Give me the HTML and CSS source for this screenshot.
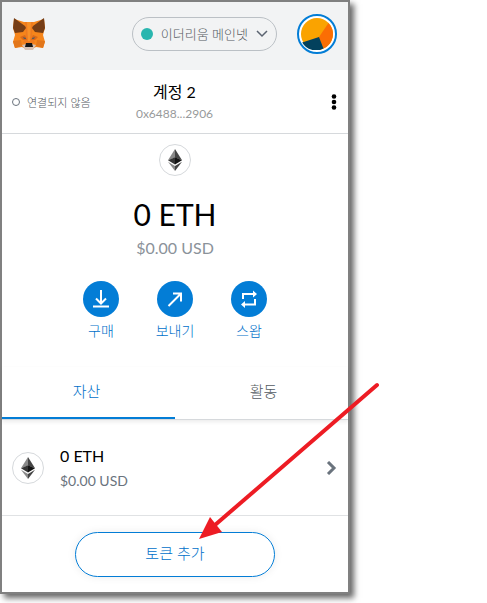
FILE: index.html
```html
<!DOCTYPE html>
<html lang="ko">
<head>
    <meta charset="UTF-8">
    <meta name="viewport" content="width=device-width, initial-scale=1.0">
    <title>MetaMask</title>
    <link rel="stylesheet" href="styles.css">
</head>
<body>
    <!-- eth logo, used twice -->
    <svg class="symbols" aria-hidden="true">
        <symbol id="eth" viewBox="0 0 14 22">
            <path fill="#8a8a8a" d="M7 0L0 11.2 7 8.4z"/>
            <path fill="#454545" d="M7 0v8.4l7 2.8z"/>
            <path fill="#343434" d="M7 8.2L0 11.2 7 15.4z"/>
            <path fill="#141414" d="M7 8.2l7 3L7 15.4z"/>
            <path fill="#8a8a8a" d="M0 12.8L7 22v-5z"/>
            <path fill="#454545" d="M14 12.8L7 22v-5z"/>
        </symbol>
    </svg>

    <main class="wallet">
        <header class="app-header">
            <svg class="fox" viewBox="0 0 34 32" role="img" aria-label="MetaMask">
                <path fill="#f6851b" d="M2 1l10 3h10l10-3 1 9-2 7 2 7-2 6-7-1-4 2h-6l-4-2-7 1-2-6 2-7-2-7z"/>
                <path fill="#e2761b" d="M1 23l8-1 1 6-7 2zM33 23l-8-1-1 6 7 2z"/>
                <path fill="#ee7b20" d="M13 4h8l-1 12 3 9h-12l3-9z"/>
                <path fill="#f89028" d="M15 4h4l-1 19h-2z"/>
                <path fill="#763d16" d="M2 0l11 8 1 2-3 4-8 1-2-5zM32 0L21 8l-1 2 3 4 8 1 2-5z"/>
                <path fill="#d9691a" d="M8 19l5-2 2 5-4 0zM26 19l-5-2-2 5 4 0z"/>
                <path fill="#5b5a5e" d="M11 19l3 1v1l-2 0zM23 19l-3 1v1l2 0z"/>
                <path fill="#d7c1b3" d="M10 27l4-1h6l4 1-3 5h-8z"/>
                <path fill="#161616" d="M14 25h6l1 4h-8z"/>
            </svg>
            <button class="network" type="button">
                <span class="network-dot"></span>
                <span>이더리움 메인넷</span>
                <svg class="chevron-down" width="12" height="8" viewBox="0 0 12 8"><path d="M1 1l5 5 5-5"/></svg>
            </button>
            <button class="avatar" type="button" aria-label="내 계정">
                <svg width="32" height="32" viewBox="0 0 32 32">
                    <circle cx="16" cy="16" r="16" fill="#faa300"/>
                    <path fill="#fb6e04" d="M18 19L27.500 4.900A16 16 0 0 1 22.500 30.600z"/>
                    <path fill="#03415d" d="M18 19L22.500 30.600A16 16 0 0 1 1.200 24.500z"/>
                </svg>
            </button>
        </header>

        <section class="account-bar">
            <div class="connection"><span class="connection-dot"></span>연결되지 않음</div>
            <div class="account">
                <h1 class="account-name">계정 2</h1>
                <div class="account-address">0x6488...2906</div>
            </div>
            <button class="menu" type="button" aria-label="계정 옵션">
                <svg width="6" height="16" viewBox="0 0 6 16"><circle cx="3" cy="2.500" r="2.300"/><circle cx="3" cy="8" r="2.300"/><circle cx="3" cy="13.500" r="2.300"/></svg>
            </button>
        </section>

        <section class="overview">
            <span class="token-icon"><svg width="14" height="22"><use href="#eth"/></svg></span>
            <div class="balance">0 ETH</div>
            <div class="fiat">$0.00 USD</div>
            <div class="actions">
                <button class="action" type="button">
                    <span class="action-icon"><svg width="18" height="18" viewBox="0 0 18 18"><path d="M9 0v13M4 8.500l5 5 5-5M1 16.500h16"/></svg></span>
                    구매
                </button>
                <button class="action" type="button">
                    <span class="action-icon"><svg width="18" height="18" viewBox="0 0 18 18"><path d="M2.500 16L15 3.500M7 3.500h8v8"/></svg></span>
                    보내기
                </button>
                <button class="action" type="button">
                    <span class="action-icon"><svg width="18" height="18" viewBox="0 0 18 18"><path d="M3 9V4h11M15 9v5.500H4"/><path class="solid" d="M13 .5l4 3.500-4 3.500zM5 11l-4 3.500L5 18z"/></svg></span>
                    스왑
                </button>
            </div>
        </section>

        <nav class="tabs">
            <button class="tab active" type="button">자산</button>
            <button class="tab" type="button">활동</button>
        </nav>

        <button class="asset" type="button">
            <span class="token-icon"><svg width="14" height="22"><use href="#eth"/></svg></span>
            <span class="asset-text">
                <span class="asset-amount">0 ETH</span>
                <span class="asset-fiat">$0.00 USD</span>
            </span>
            <svg class="chevron-right" width="12" height="14" viewBox="0 0 12 14"><path d="M2 1l6 6-6 6"/></svg>
        </button>

        <div class="add-token">
            <button class="add-token-btn" type="button">토큰 추가</button>
        </div>

        <!-- red pointer to the add-token button -->
        <svg class="pointer" width="182" height="158" viewBox="0 0 182 158" aria-hidden="true">
            <path class="pointer-line" d="M178 3L16 143"/>
            <path class="pointer-head" d="M0 157L11 135l12 15z"/>
        </svg>
    </main>
</body>
</html>
```
FILE: styles.css
```css
* {
    margin: 0;
    padding: 0;
    box-sizing: border-box;
}

body {
    padding-bottom: 9px;
    background: #fff;
    color: #000;
    font-family: Lato, "Noto Sans CJK KR", sans-serif;
}

button {
    border: none;
    background: none;
    font-family: inherit;
    color: inherit;
    cursor: pointer;
}

svg {
    display: block;
}

.symbols {
    position: absolute;
    width: 0;
    height: 0;
}

.wallet {
    position: relative;
    max-width: 350px;
    border: 2px solid #808080;
    background: #fff;
    box-shadow: 4px 4px 6px rgba(0, 0, 0, 0.6);
}

/* header */
.app-header {
    display: flex;
    align-items: center;
    gap: 20px;
    padding: 12px 11px 16px 10px;
    background: #f2f3f4;
}

.fox {
    width: 34px;
    height: 32px;
    margin-right: auto;
}

.network {
    display: flex;
    align-items: center;
    gap: 8px;
    height: 34px;
    padding: 0 8px;
    border: 1px solid #bbc0c5;
    border-radius: 17px;
    font-size: 13px;
    font-weight: 300;
    line-height: 20px;
    color: #535a61;
}

.network-dot {
    width: 12px;
    height: 12px;
    border-radius: 50%;
    background: #29b6af;
}

.chevron-down {
    fill: none;
    stroke: #5b6370;
    stroke-width: 1.5;
}

.avatar {
    padding: 2px;
    border: 2px solid #037dd6;
    border-radius: 50%;
    background: #fff;
}

/* account bar */
.account-bar {
    display: grid;
    grid-template-columns: 1fr auto 1fr;
    align-items: center;
    height: 64px;
    padding: 0 11px 0 10px;
    border-bottom: 1px solid #d6d9dc;
}

.connection {
    display: flex;
    align-items: center;
    gap: 7px;
    font-size: 11px;
    font-weight: 300;
    color: #535a61;
}

.connection-dot {
    width: 8px;
    height: 8px;
    border: 1px solid #6a737d;
    border-radius: 50%;
}

.account {
    text-align: center;
}

.account-name {
    font-size: 16px;
    font-weight: 400;
    line-height: 24px;
}

.account-address {
    font-size: 12px;
    line-height: 20px;
    color: #989a9b;
}

.menu {
    justify-self: end;
}

/* balance */
.overview {
    display: flex;
    flex-direction: column;
    align-items: center;
    padding: 10px 0 26px;
}

.token-icon {
    display: flex;
    align-items: center;
    justify-content: center;
    width: 32px;
    height: 32px;
    border: 1px solid #d6d9dc;
    border-radius: 50%;
    background: #fff;
}

.balance {
    margin-top: 16px;
    font-size: 30px;
    line-height: 44px;
}

.fiat {
    font-size: 16px;
    line-height: 24px;
    color: #8b929a;
}

.actions {
    display: flex;
    gap: 14px;
    margin-top: 21px;
}

.action {
    display: flex;
    flex-direction: column;
    align-items: center;
    gap: 4px;
    width: 60px;
    font-size: 14px;
    font-weight: 300;
    line-height: 20px;
    color: #0070c9;
}

.action-icon {
    display: flex;
    align-items: center;
    justify-content: center;
    width: 36px;
    height: 36px;
    border-radius: 50%;
    background: #037dd6;
}

.action-icon path {
    fill: none;
    stroke: #fff;
    stroke-width: 2;
}

.action-icon .solid {
    fill: #fff;
    stroke: none;
}

/* tabs */
.tabs {
    display: flex;
    border-bottom: 1px solid #d6d9dc;
    box-shadow: 0 2px 4px rgba(0, 0, 0, 0.08);
}

.tab {
    flex: 1;
    height: 52px;
    padding: 0 0 4px 4px;
    border-bottom: 2px solid transparent;
    font-size: 15px;
    font-weight: 300;
    color: #535a61;
}

.tab.active {
    padding: 0 4px 4px 0;
    border-bottom-color: #037dd6;
    color: #0070c9;
}

/* asset list */
.asset {
    display: flex;
    align-items: center;
    gap: 16px;
    width: 100%;
    height: 96px;
    padding: 0 10px;
    border-bottom: 1px solid #e0e2e4;
    text-align: left;
}

.asset-text {
    display: flex;
    flex: 1;
    flex-direction: column;
}

.asset-amount {
    font-size: 16px;
    line-height: 26px;
}

.asset-fiat {
    font-size: 14px;
    line-height: 24px;
    color: #6a737d;
}

.chevron-right {
    fill: none;
    stroke: #6a737d;
    stroke-width: 3;
}

.add-token {
    display: flex;
    justify-content: center;
    padding: 16px 0 15px;
}

.add-token-btn {
    width: 200px;
    height: 45px;
    padding-bottom: 4px;
    border: 1px solid #037dd6;
    border-radius: 23px;
    box-shadow: 0 0 8px rgba(0, 0, 0, 0.08);
    font-size: 15px;
    font-weight: 300;
    color: #0070c9;
}

/* pointer drawn over the popup */
.pointer {
    position: absolute;
    left: 197px;
    bottom: 52px;
}

.pointer-line {
    stroke: #ed1c24;
    stroke-width: 4;
    stroke-linecap: round;
}

.pointer-head {
    fill: #ed1c24;
}
```
